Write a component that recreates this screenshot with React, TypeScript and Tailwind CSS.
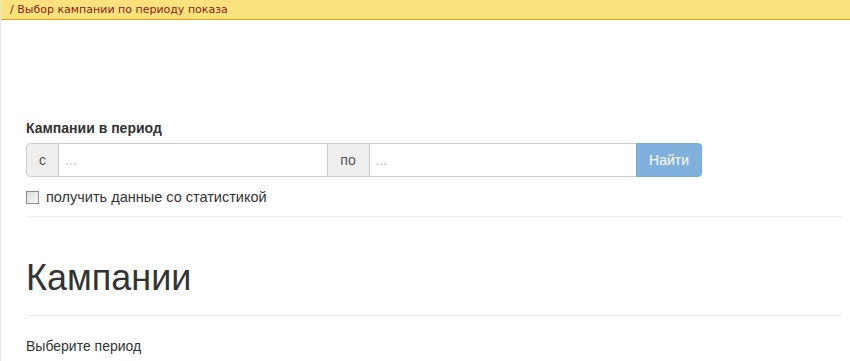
export default function App() {
  return (
    <div className="min-h-[361px] bg-white font-['Liberation_Sans',Arial,sans-serif] text-[14px] text-[#333] border-l border-[#e6e6e6]">
      <div className="h-[20px] bg-[#fbe27d] border-b border-[#f39c12] pl-[9px] font-['DejaVu_Sans',Verdana,sans-serif] text-[11px] leading-[19px] text-[#8b1a1a]">
        / Выбор кампании по периоду показа
      </div>

      <div className="ml-[25px] mr-[7px]">
        <div className="pt-[98px] font-bold leading-[20px]">Кампании в период</div>

        <div className="mt-[5px] flex h-[34px] w-[676px]">
          <span className="flex w-[33px] items-center justify-center rounded-l-[4px] border border-[#ccc] bg-[#eee] text-[#555]">
            с
          </span>
          <input
            placeholder="..."
            className="w-[268px] border-y border-[#ccc] px-[6px] text-[14px] text-[#555] outline-none placeholder:text-[#bbb]"
          />
          <span className="flex w-[43px] items-center justify-center border border-[#ccc] bg-[#eee] text-[#555]">
            по
          </span>
          <input
            placeholder="..."
            className="w-[267px] border-y border-[#ccc] px-[6px] text-[14px] text-[#555] outline-none placeholder:text-[#bbb]"
          />
          <button className="w-[66px] rounded-r-[4px] border border-[#7aa9d6] bg-[#80b1dc] text-[14px] text-white">
            Найти
          </button>
        </div>

        <label className="mt-[10px] flex items-center gap-[7px] leading-[20px]">
          <span className="inline-block h-[13px] w-[13px] border border-[#8a8a8a] bg-gradient-to-br from-[#dcdcdc] to-[#f6f6f6]" />
          <span className="text-[14.5px]">получить данные со статистикой</span>
        </label>

        <div className="mt-[9px] border-t border-[#eee]" />

        <h1 className="mt-[41px] pb-[17px] text-[36px] font-normal leading-[40px] text-[#333] border-b border-[#eee]">
          Кампании
        </h1>

        <p className="mt-[20px] leading-[20px]">Выберите период</p>
      </div>
    </div>
  );
}
